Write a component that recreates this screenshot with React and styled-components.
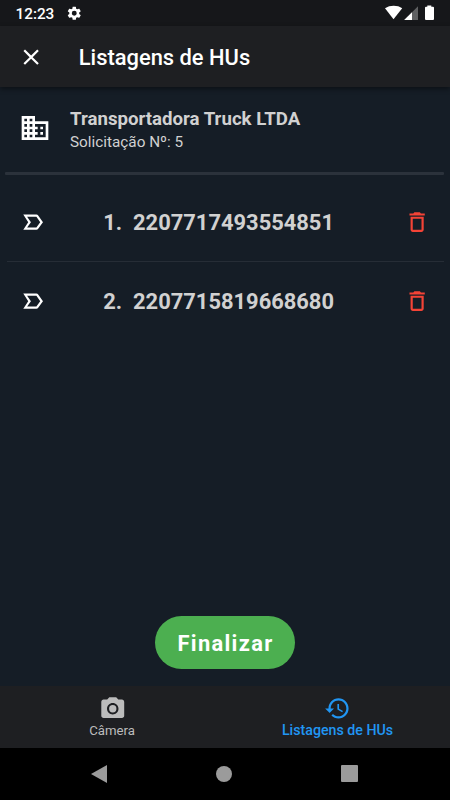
import React from "react";
import styled, { createGlobalStyle } from "styled-components";

const GlobalStyle = createGlobalStyle`
  *, *::before, *::after { box-sizing: border-box; }
  body { margin: 0; background: #151d26; font-family: Roboto, "Noto Sans", sans-serif; }
`;

const Screen = styled.div`
  width: 450px;
  height: 800px;
  display: flex;
  flex-direction: column;
  overflow: hidden;
  background: #151d26;
  color: #d1d1d1;
`;

const StatusBar = styled.div`
  flex: none;
  height: 26px;
  display: flex;
  align-items: center;
  padding: 0 14px 0 15.5px;
  background: #16171a;
  color: #fff;
`;

const Clock = styled.span`
  width: 50.5px;
  font-size: 15.3px;
  font-weight: 500;
  line-height: 26px;
  padding-top: 1px;
  white-space: nowrap;
`;

const StatusIcons = styled.div`
  display: flex;
  align-items: center;
  margin-left: auto;
`;

const AppBar = styled.header`
  flex: none;
  height: 61px;
  display: flex;
  align-items: center;
  padding: 1px 17.5px 0;
  background: #1e1f22;
  color: #fff;
  box-shadow: 0 2px 5px rgba(0, 0, 0, 0.45);
`;

const Title = styled.h1`
  margin: 1px 0 0 35px;
  font-size: 21.9px;
  font-weight: 500;
  line-height: 28px;
  white-space: nowrap;
`;

const Icon = styled.svg`
  flex: none;
  display: block;
  width: ${(p) => p.$size}px;
  height: ${(p) => p.$size}px;
  fill: ${(p) => p.$color || "currentColor"};
`;

const Content = styled.main`
  flex: 1;
  display: flex;
  flex-direction: column;
`;

const Carrier = styled.section`
  height: 85px;
  display: flex;
  align-items: flex-start;
  padding: 20px 19px 0;
`;

const CarrierIcon = styled.div`
  width: 51px;
  padding-top: 5px;
`;

const CarrierName = styled.div`
  font-size: 18.65px;
  font-weight: 700;
  line-height: 24px;
  white-space: nowrap;
`;

const CarrierRequest = styled.div`
  font-size: 15.3px;
  line-height: 22px;
  white-space: nowrap;
`;

const ThickRule = styled.hr`
  width: 439px;
  height: 3px;
  margin: 0 5.5px 0 5px;
  border: 0;
  border-radius: 1px;
  background: #2b323b;
`;

const List = styled.ul`
  margin: 8px 6px 0 7px;
  padding: 0;
  list-style: none;
`;

const ListRow = styled.li`
  height: 79px;
  display: flex;
  align-items: center;
  padding: 0 14px 0 13px;
  border-bottom: 1px solid ${(p) => (p.$divided ? "#262d36" : "transparent")};
`;

const Code = styled.span`
  flex: 1;
  padding-left: 57px;
  padding-top: 1px;
  font-size: 21.9px;
  font-weight: 700;
  white-space: pre;
`;

const Actions = styled.div`
  margin-top: auto;
  display: flex;
  justify-content: center;
  padding-bottom: 17px;
`;

const FinishButton = styled.button`
  width: 140px;
  height: 53px;
  padding: 2px 0 0 1px;
  border: 0;
  border-radius: 27px;
  background: #4caf50;
  color: #fff;
  font: 700 21.9px Roboto, sans-serif;
  letter-spacing: 1.3px;
`;

const BottomBar = styled.nav`
  flex: none;
  height: 62px;
  display: flex;
  background: #1e1f22;
`;

const Tab = styled.div`
  flex: 1;
  display: flex;
  flex-direction: column;
  align-items: center;
  padding-top: 8px;
  color: ${(p) => (p.$active ? "#2196f3" : "#bcbcbc")};
`;

const TabIconBox = styled.div`
  height: 28px;
  display: flex;
  align-items: center;
  padding-top: ${(p) => (p.$low ? 1 : 0)}px;
`;

const TabLabel = styled.span`
  font-size: ${(p) => (p.$active ? 14.2 : 13.2)}px;
  font-weight: ${(p) => (p.$active ? 500 : 400)};
  line-height: 17px;
  white-space: nowrap;
  margin-right: ${(p) => (p.$active ? 0 : 1)}px;
`;

const SystemBar = styled.footer`
  flex: none;
  height: 52px;
  display: flex;
  align-items: center;
  justify-content: space-between;
  padding: 0 92px 1px 91px;
  background: #000;
`;

const paths = {
  settings:
    "M19.14 12.94c.04-.3.06-.61.06-.94 0-.32-.02-.64-.07-.94l2.03-1.58a.49.49 0 0 0 .12-.61l-1.92-3.32a.488.488 0 0 0-.59-.22l-2.39.96c-.5-.38-1.03-.7-1.62-.94l-.36-2.54a.484.484 0 0 0-.48-.41h-3.84c-.24 0-.43.17-.47.41l-.36 2.54c-.59.24-1.13.57-1.62.94l-2.39-.96c-.22-.08-.47 0-.59.22L2.74 8.87c-.12.21-.08.47.12.61l2.03 1.58c-.05.3-.09.63-.09.94s.02.64.07.94l-2.03 1.58a.49.49 0 0 0-.12.61l1.92 3.32c.12.22.37.29.59.22l2.39-.96c.5.38 1.03.7 1.62.94l.36 2.54c.05.24.24.41.48.41h3.84c.24 0 .44-.17.47-.41l.36-2.54c.59-.24 1.13-.56 1.62-.94l2.39.96c.22.08.47 0 .59-.22l1.92-3.32c.12-.22.07-.47-.12-.61l-2.01-1.58zM12 15.6A3.6 3.6 0 1 1 12 8.4a3.6 3.6 0 0 1 0 7.2z",
  close:
    "M19 6.41L17.59 5 12 10.59 6.41 5 5 6.41 10.59 12 5 17.59 6.41 19 12 13.41 17.59 19 19 17.59 13.41 12z",
  business:
    "M12 7V3H2v18h20V7H12zM6 19H4v-2h2v2zm0-4H4v-2h2v2zm0-4H4V9h2v2zm0-4H4V5h2v2zm4 12H8v-2h2v2zm0-4H8v-2h2v2zm0-4H8V9h2v2zm0-4H8V5h2v2zm10 12h-8v-2h2v-2h-2v-2h2v-2h-2V9h8v10zm-2-8h-2v2h2v-2zm0 4h-2v2h2v-2z",
  label:
    "M15 19H3l4.5-7L3 5h12c.65 0 1.26.31 1.63.84L21 12l-4.37 6.16c-.37.52-.98.84-1.63.84zm-8.5-2H15l3.5-5L15 7H6.5l3.5 5-3.5 5z",
  trash:
    "M6 19c0 1.1.9 2 2 2h8c1.1 0 2-.9 2-2V7H6v12zM8 9h8v10H8V9zm7.5-5l-1-1h-5l-1 1H5v2h14V4z",
  camera:
    "M12 8.8a3.2 3.2 0 1 0 0 6.4 3.2 3.2 0 0 0 0-6.4zM9 2L7.17 4H4c-1.1 0-2 .9-2 2v12c0 1.1.9 2 2 2h16c1.1 0 2-.9 2-2V6c0-1.1-.9-2-2-2h-3.17L15 2H9zm3 15c-2.76 0-5-2.24-5-5s2.24-5 5-5 5 2.24 5 5-2.24 5-5 5z",
  history:
    "M13 3c-4.97 0-9 4.03-9 9H1l3.89 3.89.07.14L9 12H6c0-3.87 3.13-7 7-7s7 3.13 7 7-3.13 7-7 7c-1.93 0-3.68-.79-4.94-2.06l-1.42 1.42C8.27 19.99 10.51 21 13 21c4.97 0 9-4.03 9-9s-4.03-9-9-9zm-1 5v5l4.28 2.54.72-1.21-3.5-2.08V8H12z",
};

const Glyph = ({ name, size = 26.25, color }) => (
  <Icon viewBox="0 0 24 24" $size={size} $color={color} aria-hidden="true">
    <path d={paths[name]} />
  </Icon>
);

const StatusGlyphs = () => (
  <svg width="52" height="18" viewBox="384 4 52 18" aria-hidden="true">
    <path d="M385 8.2C390 4.9 397.5 4.9 402.2 8.2L393.5 19.3z" fill="#fff" />
    <path d="M418 6.2V20H404.2z" fill="#5f6062" />
    <path d="M412 12.2V20H404.2z" fill="#fff" />
    <path d="M427.3 5.5h4v1.2h1.7q1 0 1 1V19q0 1-1 1h-7q-1 0-1-1V7.7q0-1 1-1h1.3z" fill="#fff" />
  </svg>
);

const items = ["2207717493554851", "2207715819668680"];

export default function App() {
  return (
    <>
      <GlobalStyle />
      <Screen>
        <StatusBar>
          <Clock>12:23</Clock>
          <Glyph name="settings" size={16.5} />
          <StatusIcons>
            <StatusGlyphs />
          </StatusIcons>
        </StatusBar>
        <AppBar>
          <Glyph name="close" />
          <Title>Listagens de HUs</Title>
        </AppBar>
        <Content>
          <Carrier>
            <CarrierIcon>
              <Glyph name="business" size={32} color="#fff" />
            </CarrierIcon>
            <div>
              <CarrierName>Transportadora Truck LTDA</CarrierName>
              <CarrierRequest>Solicitação Nº: 5</CarrierRequest>
            </div>
          </Carrier>
          <ThickRule />
          <List>
            {items.map((code, i) => (
              <ListRow key={code} $divided={i < items.length - 1}>
                <Glyph name="label" color="#fff" />
                <Code>{`${i + 1}.  ${code}`}</Code>
                <Glyph name="trash" color="#f44336" />
              </ListRow>
            ))}
          </List>
          <Actions>
            <FinishButton>Finalizar</FinishButton>
          </Actions>
        </Content>
        <BottomBar>
          <Tab>
            <TabIconBox $low>
              <Glyph name="camera" size={27.5} />
            </TabIconBox>
            <TabLabel>Câmera</TabLabel>
          </Tab>
          <Tab $active>
            <TabIconBox>
              <Glyph name="history" size={26.8} />
            </TabIconBox>
            <TabLabel $active>Listagens de HUs</TabLabel>
          </Tab>
        </BottomBar>
        <SystemBar>
          <svg width="16" height="18" viewBox="0 0 16 18" fill="#9b9b9b" aria-hidden="true">
            <path d="M0 9L16 0v18z" />
          </svg>
          <svg width="16" height="16" viewBox="0 0 16 16" fill="#9b9b9b" aria-hidden="true">
            <circle cx="8" cy="8" r="8" />
          </svg>
          <svg width="17" height="17" viewBox="0 0 17 17" fill="#9b9b9b" aria-hidden="true">
            <rect width="17" height="17" rx="1" />
          </svg>
        </SystemBar>
      </Screen>
    </>
  );
}
